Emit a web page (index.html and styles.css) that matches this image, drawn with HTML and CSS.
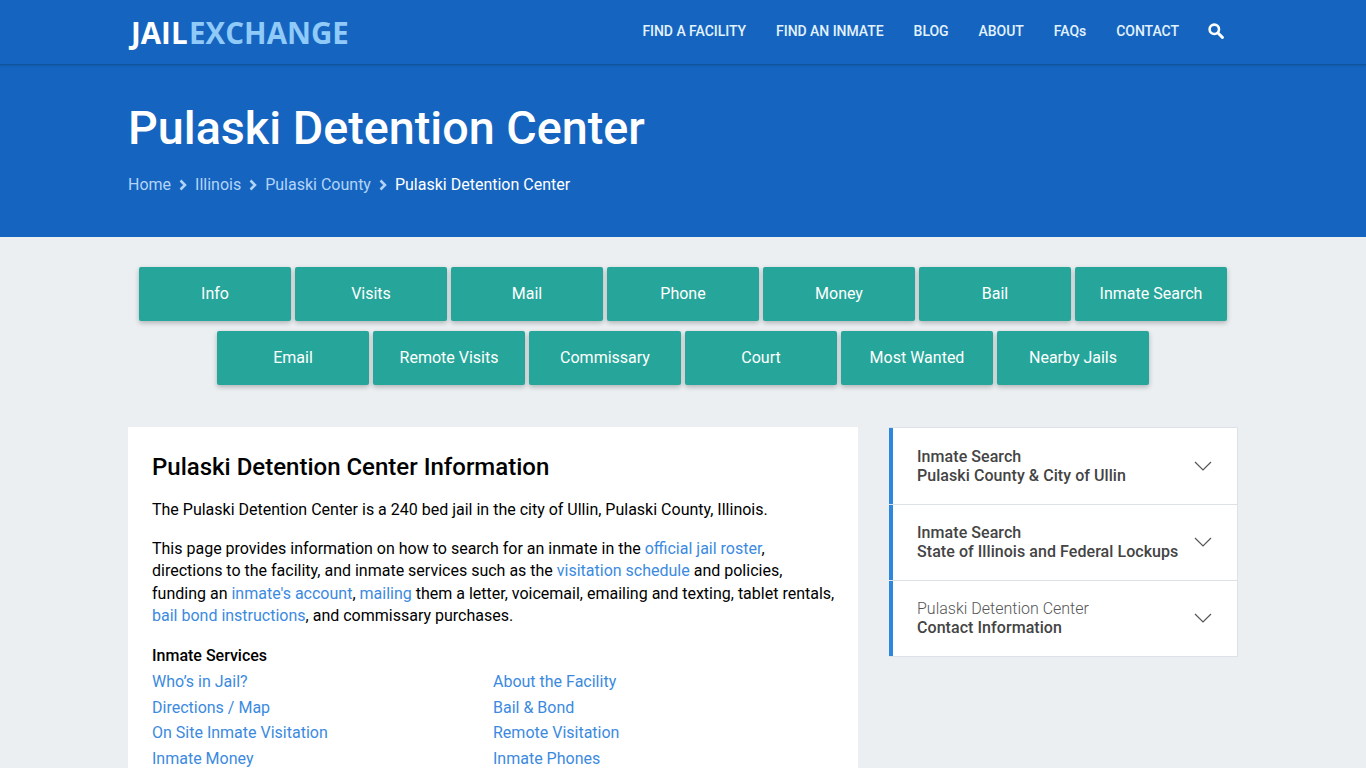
FILE: index.html
```html
<!DOCTYPE html>
<html lang="en">

<head>
    <meta charset="UTF-8" />
    <meta name="viewport" content="width=device-width, initial-scale=1.0" />
    <title>Pulaski Detention Center</title>
    <link rel="stylesheet" href="styles.css">
</head>

<body>

    <header class="topbar">
        <div class="wrap topbar-inner">
            <a class="logo" href="#"><span class="logo-jail">JAIL</span><span class="logo-exchange">EXCHANGE</span></a>
            <nav class="topnav">
                <a href="#">FIND A FACILITY</a>
                <a href="#">FIND AN INMATE</a>
                <a href="#">BLOG</a>
                <a href="#">ABOUT</a>
                <a href="#">FAQs</a>
                <a href="#">CONTACT</a>
                <a href="#" class="search-link" aria-label="Search">
                    <svg width="16" height="16" viewBox="0 0 16 16">
                        <circle cx="6.3" cy="6.3" r="4.7" fill="none" stroke="#fff" stroke-width="2.6" />
                        <path d="M10 10 L14.4 14.4" stroke="#fff" stroke-width="2.9" stroke-linecap="round" />
                    </svg>
                </a>
            </nav>
        </div>
    </header>

    <section class="hero">
        <div class="wrap">
            <h1>Pulaski Detention Center</h1>
            <div class="crumbs">
                <a href="#">Home</a>
                <svg class="crumb-sep" width="8" height="12" viewBox="0 0 8 12"><path d="M1.5 1.5 L6 6 L1.5 10.5" /></svg>
                <a href="#">Illinois</a>
                <svg class="crumb-sep" width="8" height="12" viewBox="0 0 8 12"><path d="M1.5 1.5 L6 6 L1.5 10.5" /></svg>
                <a href="#">Pulaski County</a>
                <svg class="crumb-sep" width="8" height="12" viewBox="0 0 8 12"><path d="M1.5 1.5 L6 6 L1.5 10.5" /></svg>
                <span class="crumb-current">Pulaski Detention Center</span>
            </div>
        </div>
    </section>

    <div class="wrap">
        <div class="buttons">
            <a class="btn" href="#">Info</a>
            <a class="btn" href="#">Visits</a>
            <a class="btn" href="#">Mail</a>
            <a class="btn" href="#">Phone</a>
            <a class="btn" href="#">Money</a>
            <a class="btn" href="#">Bail</a>
            <a class="btn" href="#">Inmate Search</a>
            <a class="btn" href="#">Email</a>
            <a class="btn" href="#">Remote Visits</a>
            <a class="btn" href="#">Commissary</a>
            <a class="btn" href="#">Court</a>
            <a class="btn" href="#">Most Wanted</a>
            <a class="btn" href="#">Nearby Jails</a>
        </div>

        <div class="columns">
            <main class="card">
                <h2>Pulaski Detention Center Information</h2>
                <p>The Pulaski Detention Center is a 240 bed jail in the city of Ullin, Pulaski County, Illinois.</p>
                <p>This page provides information on how to search for an inmate in the <a href="#">official jail roster</a>, directions to the facility, and inmate services such as the <a href="#">visitation schedule</a> and policies, funding an <a href="#">inmate's account</a>, <a href="#">mailing</a> them a letter, voicemail, emailing and texting, tablet rentals, <a href="#">bail bond instructions</a>, and commissary purchases.</p>
                <h3>Inmate Services</h3>
                <div class="service-links">
                    <a href="#">Who’s in Jail?</a>
                    <a href="#">About the Facility</a>
                    <a href="#">Directions / Map</a>
                    <a href="#">Bail &amp; Bond</a>
                    <a href="#">On Site Inmate Visitation</a>
                    <a href="#">Remote Visitation</a>
                    <a href="#">Inmate Money</a>
                    <a href="#">Inmate Phones</a>
                </div>
            </main>

            <aside class="side">
                <div class="side-row">
                    <div class="side-item">
                        <div class="side-text"><b>Inmate Search</b><br><b>Pulaski County &amp; City of Ullin</b></div>
                        <svg class="chevron" width="18" height="10" viewBox="0 0 18 10"><path d="M1 1 L9 9 L17 1" /></svg>
                    </div>
                </div>
                <div class="side-row">
                    <div class="side-item">
                        <div class="side-text"><b>Inmate Search</b><br><b>State of Illinois and Federal Lockups</b></div>
                        <svg class="chevron" width="18" height="10" viewBox="0 0 18 10"><path d="M1 1 L9 9 L17 1" /></svg>
                    </div>
                </div>
                <div class="side-row">
                    <div class="side-item">
                        <div class="side-text">Pulaski Detention Center<br><b>Contact Information</b></div>
                        <svg class="chevron" width="18" height="10" viewBox="0 0 18 10"><path d="M1 1 L9 9 L17 1" /></svg>
                    </div>
                </div>
            </aside>
        </div>
    </div>

</body>

</html>
```

FILE: styles.css
```css
* {
    box-sizing: border-box;
}

html {
    overflow: hidden;
}

body {
    margin: 0;
    height: 768px;
    overflow: hidden;
    background-color: #ebeff2;
    font-family: Roboto, "Liberation Sans", sans-serif;
    font-size: 16px;
    color: #000;
}

a {
    text-decoration: none;
}

.wrap {
    width: 1110px;
    margin: 0 auto;
}

/* top bar */

.topbar {
    height: 65px;
    background-color: #1565c0;
    border-bottom: 1px solid #11539e;
    box-shadow: 0 1px 2px rgba(0, 0, 0, 0.15);
    position: relative;
}

.topbar-inner {
    display: flex;
    align-items: center;
    justify-content: space-between;
    height: 64px;
}

.logo {
    margin-left: 3px;
    padding-top: 1px;
    font-family: "Open Sans", sans-serif;
    font-weight: 700;
    font-size: 29.5px;
    line-height: 1;
}

.logo-jail {
    color: #fff;
    margin-right: 1.5px;
}

.logo-exchange {
    color: #90caf9;
}

.topnav {
    display: flex;
    align-items: center;
    gap: 30px;
    padding-right: 14px;
    padding-bottom: 2px;
}

.topnav a {
    color: #e3f2fd;
    font-size: 14px;
    font-weight: 500;
    letter-spacing: -0.04px;
}

.topnav .search-link {
    display: flex;
    margin-left: -1px;
}

/* hero */

.hero {
    height: 172px;
    background-color: #1565c0;
    padding-top: 35px;
}

.hero h1 {
    margin: 0;
    color: #fff;
    font-size: 46.7px;
    font-weight: 500;
    line-height: 57px;
}

.crumbs {
    display: flex;
    align-items: center;
    margin-top: 16px;
    line-height: 24px;
}

.crumbs a {
    color: #b3d4f9;
}

.crumb-current {
    color: #fff;
}

.crumb-sep {
    margin: 0 8px;
}

.crumb-sep path {
    fill: none;
    stroke: #b3d4f9;
    stroke-width: 2.5;
}

/* button grid */

.buttons {
    display: flex;
    flex-wrap: wrap;
    justify-content: center;
    gap: 10px 4px;
    padding-top: 30px;
}

.btn {
    width: 152px;
    height: 54px;
    padding-bottom: 2px;
    display: flex;
    align-items: center;
    justify-content: center;
    background-color: #26a69a;
    color: #fff;
    border-radius: 2px;
    box-shadow: 0 2px 5px rgba(0, 0, 0, 0.25);
}

/* main columns */

.columns {
    display: flex;
    justify-content: space-between;
    align-items: flex-start;
    margin-top: 42px;
}

.card {
    width: 730px;
    height: 600px;
    background-color: #fff;
    padding: 24px 20px 24px 24px;
}

.card h2 {
    margin: 0 0 16px;
    font-size: 24px;
    font-weight: 500;
    line-height: 32px;
}

.card p {
    margin: 0 0 16.6px;
    line-height: 22.4px;
}

.card a {
    color: #3b8ae0;
}

.card h3 {
    margin: -0.8px 0 0;
    font-size: 16px;
    font-weight: 500;
    line-height: 25.6px;
}

.service-links {
    display: grid;
    grid-template-columns: 341px 1fr;
    line-height: 25.6px;
}

/* sidebar */

.side {
    width: 349px;
    border-top: 1px solid #dde2e8;
    border-right: 1px solid #dde2e8;
    background-color: #fff;
}

.side-row {
    border-bottom: 1px solid #dde2e8;
}

.side-item {
    display: flex;
    align-items: center;
    justify-content: space-between;
    height: 75px;
    border-left: 4px solid #2e86de;
    padding: 0 25px 1px 24px;
    color: #555;
    line-height: 19px;
}

.side-row:first-child .side-item {
    height: 76px;
    padding-bottom: 0;
}

.side-text {
    font-weight: 300;
}

.side-text b {
    font-weight: 500;
    color: #444;
    letter-spacing: 0.06px;
}

.chevron path {
    fill: none;
    stroke: #555;
    stroke-width: 1.2;
}
```
